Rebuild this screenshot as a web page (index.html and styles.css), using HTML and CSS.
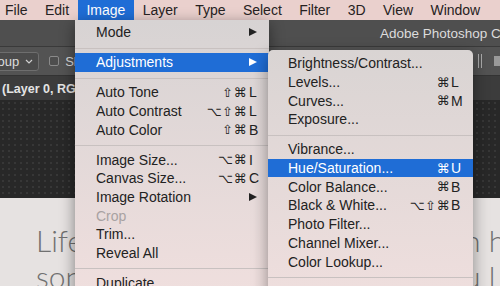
FILE: index.html
```html
<!DOCTYPE html>
<html lang="en">

<head>
    <meta charset="UTF-8">
    <meta name="viewport" content="width=device-width, initial-scale=1.0">
    <title>Image menu</title>
    <link rel="stylesheet" href="styles.css">
</head>

<body>
    <header class="menubar">
        <span class="menubar-item first">File</span>
        <span class="menubar-item">Edit</span>
        <span class="menubar-item open">Image</span>
        <span class="menubar-item">Layer</span>
        <span class="menubar-item">Type</span>
        <span class="menubar-item">Select</span>
        <span class="menubar-item">Filter</span>
        <span class="menubar-item">3D</span>
        <span class="menubar-item">View</span>
        <span class="menubar-item">Window</span>
    </header>

    <div class="app">
        <div class="titlebar">
            <span class="title">Adobe Photoshop CC 2017</span>
        </div>
        <div class="options">
            <div class="select">Group
                <svg class="chevron" width="8" height="5" viewBox="0 0 8 5">
                    <path d="M1 1 L4 4 L7 1" fill="none" stroke="#cfcfcf" stroke-width="1.2" />
                </svg>
            </div>
            <label class="check"><span class="box"></span>Show Transform Controls</label>
            <div class="tools">
                <span class="tool-line"></span>
                <span class="tool-block"></span>
            </div>
        </div>
        <div class="tabs">
            <span class="tab">(Layer 0, RGB/8) *</span>
        </div>
        <div class="canvas"></div>
        <div class="artwork">
            <div class="line"><span class="line-left">Life is</span><span class="line-right">n h</span></div>
            <div class="line"><span class="line-left">son</span><span class="line-right">u l</span></div>
        </div>
    </div>

    <!-- Image menu -->
    <div class="menu image-menu">
        <div class="item">Mode<span class="keys"><span class="key"><span class="arrow"></span></span></span></div>
        <div class="sep"></div>
        <div class="item active">Adjustments<span class="keys"><span class="key"><span class="arrow"></span></span></span></div>
        <div class="sep"></div>
        <div class="item">Auto Tone<span class="keys"><span class="mods">⇧⌘</span><span class="key">L</span></span></div>
        <div class="item">Auto Contrast<span class="keys"><span class="mods">⌥⇧⌘</span><span class="key">L</span></span></div>
        <div class="item">Auto Color<span class="keys"><span class="mods">⇧⌘</span><span class="key">B</span></span></div>
        <div class="sep"></div>
        <div class="item">Image Size...<span class="keys"><span class="mods">⌥⌘</span><span class="key">I</span></span></div>
        <div class="item">Canvas Size...<span class="keys"><span class="mods">⌥⌘</span><span class="key">C</span></span></div>
        <div class="item">Image Rotation<span class="keys"><span class="key"><span class="arrow"></span></span></span></div>
        <div class="item disabled">Crop</div>
        <div class="item">Trim...</div>
        <div class="item">Reveal All</div>
        <div class="sep"></div>
        <div class="item">Duplicate...</div>
    </div>

    <!-- Adjustments submenu -->
    <div class="menu submenu">
        <div class="item">Brightness/Contrast...</div>
        <div class="item">Levels...<span class="keys"><span class="mods">⌘</span><span class="key">L</span></span></div>
        <div class="item">Curves...<span class="keys"><span class="mods">⌘</span><span class="key">M</span></span></div>
        <div class="item">Exposure...</div>
        <div class="sep"></div>
        <div class="item">Vibrance...</div>
        <div class="item active">Hue/Saturation...<span class="keys"><span class="mods">⌘</span><span class="key">U</span></span></div>
        <div class="item">Color Balance...<span class="keys"><span class="mods">⌘</span><span class="key">B</span></span></div>
        <div class="item">Black &amp; White...<span class="keys"><span class="mods">⌥⇧⌘</span><span class="key">B</span></span></div>
        <div class="item">Photo Filter...</div>
        <div class="item">Channel Mixer...</div>
        <div class="item">Color Lookup...</div>
        <div class="sep"></div>
        <div class="item">Invert<span class="keys"><span class="mods">⌘</span><span class="key">I</span></span></div>
    </div>
</body>

</html>
```

FILE: styles.css
```css
* {
    margin: 0;
    padding: 0;
    box-sizing: border-box;
}

body {
    width: 500px;
    height: 286px;
    overflow: hidden;
    position: relative;
    font-family: "Liberation Sans", Arial, sans-serif;
    font-size: 14px;
    color: #222;
    background-color: #2a2a2a;
}

/* top menu bar */
.menubar {
    display: flex;
    height: 20px;
    background-color: #ead0cd;
    line-height: 20px;
}

.menubar-item {
    padding: 0 8.7px;
    color: #262222;
}

.menubar-item.first {
    padding-left: 5px;
}

.menubar-item.open {
    background-color: #1f6dd6;
    color: #fff;
}

/* photoshop window */
.app {
    display: flex;
    flex-direction: column;
    height: 266px;
}

.titlebar {
    height: 27px;
    background-color: #4f4f4f;
    color: #dcdcdc;
    font-size: 13.5px;
    line-height: 27px;
    padding-left: 380px;
    white-space: nowrap;
    overflow: hidden;
    border-bottom: 1px solid #3a3a3a;
}

.options {
    display: flex;
    align-items: center;
    height: 29px;
    background-color: #535353;
    border-bottom: 1px solid #333;
    color: #dcdcdc;
    font-size: 13px;
}

.select {
    display: flex;
    align-items: center;
    gap: 6px;
    height: 19px;
    margin-left: -10px;
    padding: 0 5px 0 0;
    border: 1px solid #6e6e6e;
    border-radius: 3px;
    background-color: #4b4b4b;
    white-space: nowrap;
    text-indent: -8px;
}

.check {
    display: flex;
    align-items: center;
    gap: 6px;
    margin-left: 10px;
    white-space: nowrap;
}

.box {
    width: 10px;
    height: 10px;
    border: 1px solid #8a8a8a;
    border-radius: 2px;
    background-color: #4e4e4e;
}

.tools {
    display: flex;
    align-items: center;
    gap: 12px;
    margin-left: auto;
}

.tool-line {
    width: 4px;
    height: 14px;
    border-left: 1px solid #aaa;
    border-right: 1px solid #aaa;
}

.tool-block {
    width: 6px;
    height: 10px;
    background-color: #9a9a9a;
}

.tabs {
    height: 24px;
    background-color: #3c3c3c;
    line-height: 24px;
    padding-left: 2px;
    white-space: nowrap;
}

.tab {
    font-size: 12.5px;
    font-weight: bold;
    color: #e4e4e4;
}

.canvas {
    height: 98px;
    background-color: #282828;
    background-image: radial-gradient(#383838 0.7px, transparent 0.9px);
    background-size: 6px 6px;
}

.artwork {
    flex: 1;
    background-color: #e6e2e1;
    padding: 24px 0 0 36px;
    font-family: Lato, "Open Sans", sans-serif;
    font-weight: 300;
    font-size: 30px;
    line-height: 36px;
    color: #707070;
    white-space: nowrap;
    overflow: hidden;
}

.line {
    display: grid;
    grid-template-columns: 428px auto;
}

.line-left {
    overflow: hidden;
}

/* dropdown menus */
.menu {
    position: absolute;
    padding-top: 3px;
    background: linear-gradient(#d7d3d3, #f0dfde);
    box-shadow: 0 4px 14px rgba(0, 0, 0, 0.45);
    overflow: hidden;
}

.image-menu {
    left: 75px;
    top: 20px;
    width: 194px;
    height: 280px;
}

.submenu {
    left: 268px;
    top: 50px;
    width: 205px;
    height: 260px;
    padding-top: 4px;
    border-radius: 5px;
    background: linear-gradient(#d9d4d3, #f0dfde);
    box-shadow: 0 5px 16px rgba(0, 0, 0, 0.4);
}

.item {
    display: flex;
    justify-content: space-between;
    align-items: center;
    height: 18.7px;
    padding: 0 10px 0 21px;
    white-space: nowrap;
}

.submenu .item {
    padding-left: 20px;
}

.item.active {
    background-color: #1f6dd6;
    color: #fff;
}

.item.disabled {
    color: #a8a2a2;
}

.sep {
    height: 1px;
    margin: 6px 0 4.3px;
    background-color: #c8c1c0;
}

.keys {
    display: flex;
    align-items: center;
}

.mods {
    font-family: "DejaVu Sans", sans-serif;
    font-size: 13px;
    letter-spacing: 0.5px;
    margin-right: 2px;
}

.submenu .mods {
    margin-right: 1px;
}

.key {
    display: flex;
    align-items: center;
    width: 10px;
}

.submenu .key {
    width: 12px;
}

.arrow {
    width: 0;
    height: 0;
    border-left: 8px solid #222;
    border-top: 4.5px solid transparent;
    border-bottom: 4.5px solid transparent;
}

.item.active .arrow {
    border-left-color: #fff;
}
```
